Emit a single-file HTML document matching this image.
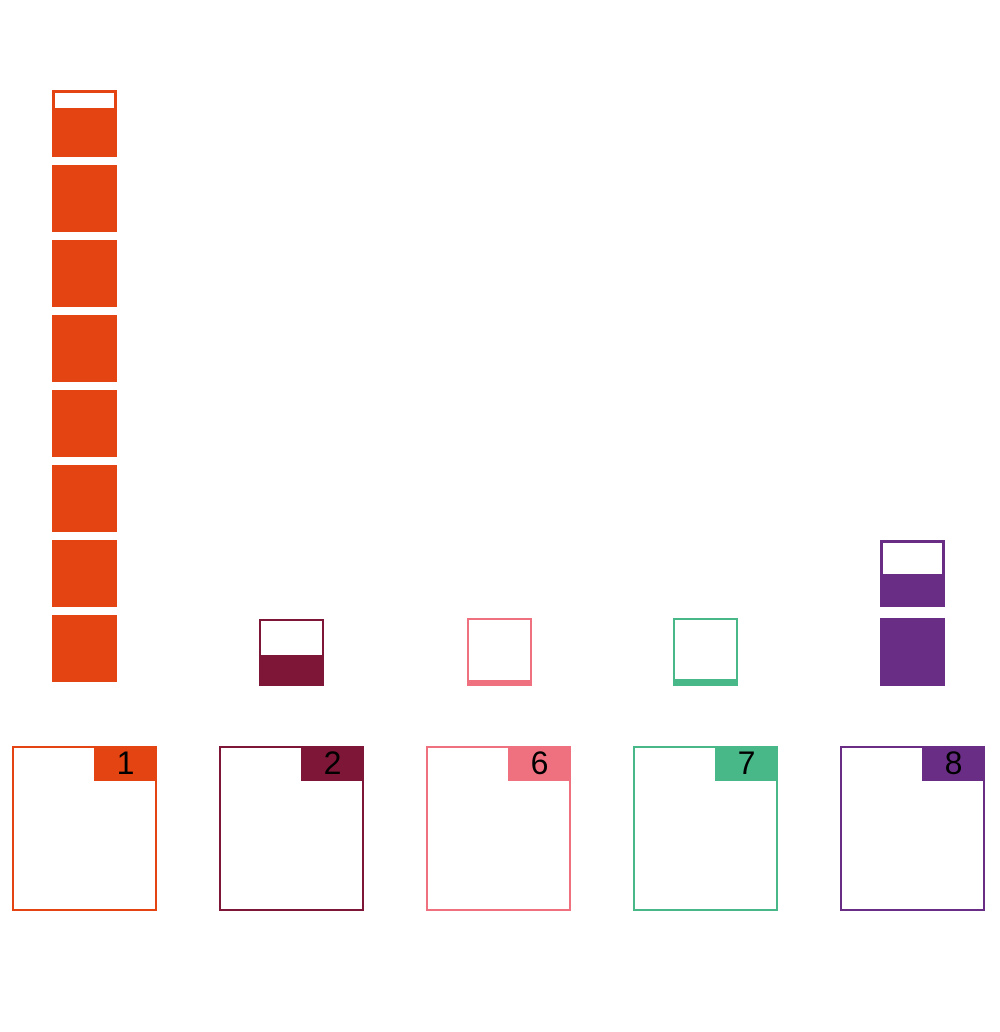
<!DOCTYPE html>
<html><head><style>
body{margin:0;width:1000px;height:1032px;background:#fff;position:relative;overflow:hidden;font-family:"Liberation Sans",sans-serif}
div{position:absolute;box-sizing:border-box}
.o{background:#e44412;left:52px;width:65px;height:67px}
.lg{top:746px;width:145px;height:165px;border:2px solid}
.lb{top:-2px;right:-2px;width:63px;height:35px;font-size:32px;line-height:35px;text-align:center;color:#000}
</style></head><body>
<div class="o" style="top:90px"><div style="left:3px;top:3px;width:59px;height:15px;background:#fff"></div></div>
<div class="o" style="top:165px"></div>
<div class="o" style="top:240px"></div>
<div class="o" style="top:315px"></div>
<div class="o" style="top:390px"></div>
<div class="o" style="top:465px"></div>
<div class="o" style="top:540px"></div>
<div class="o" style="top:615px"></div>

<div style="left:259px;top:619px;width:65px;height:67px;border:2px solid #7d1637;background:linear-gradient(#fff 0,#fff 34px,#7d1637 34px)"></div>
<div style="left:467px;top:618px;width:65px;height:68px;border:2px solid #ef7180;background:linear-gradient(#fff 0,#fff 60px,#ef7180 60px)"></div>
<div style="left:673px;top:618px;width:65px;height:68px;border:2px solid #48b888;background:linear-gradient(#fff 0,#fff 59px,#48b888 59px)"></div>
<div style="left:880px;top:540px;width:65px;height:67px;border:3px solid #6a2d85;background:linear-gradient(#fff 0,#fff 31px,#6a2d85 31px)"></div>
<div style="left:880px;top:618px;width:65px;height:68px;background:#6a2d85"></div>

<div class="lg" style="left:12px;border-color:#e44412"><div class="lb" style="background:#e44412">1</div></div>
<div class="lg" style="left:219px;border-color:#7d1637"><div class="lb" style="background:#7d1637">2</div></div>
<div class="lg" style="left:426px;border-color:#ef7180"><div class="lb" style="background:#ef7180">6</div></div>
<div class="lg" style="left:633px;border-color:#48b888"><div class="lb" style="background:#48b888">7</div></div>
<div class="lg" style="left:840px;border-color:#6a2d85"><div class="lb" style="background:#6a2d85">8</div></div>
</body></html>
